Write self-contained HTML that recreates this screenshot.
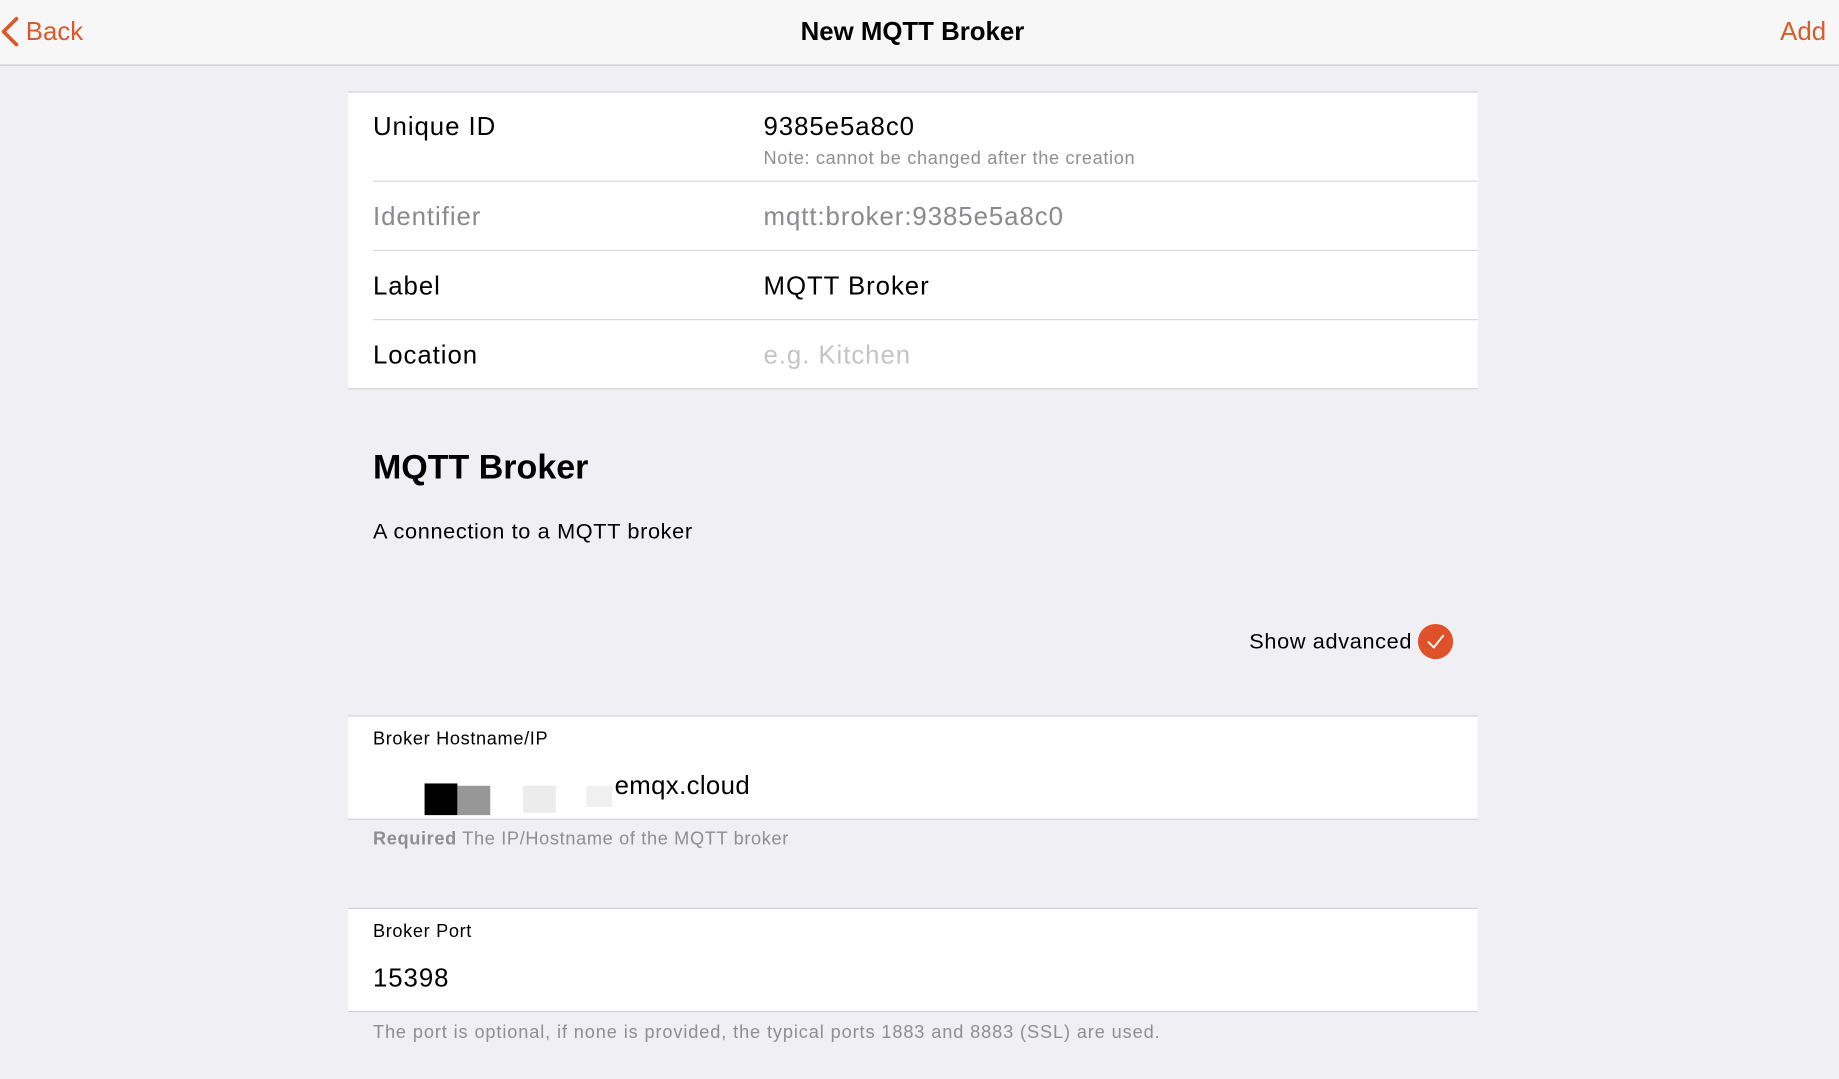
<!DOCTYPE html>
<html><head><meta charset="utf-8"><style>
html,body{margin:0;padding:0;width:1839px;height:1079px;overflow:hidden;background:#efeff4;}
#s{position:absolute;left:0;top:0;width:1568px;height:920px;transform:scale(1.17283);transform-origin:0 0;font-family:"Liberation Sans",sans-serif;color:#000;background:#efeff4;}
.a{position:absolute;white-space:nowrap;line-height:1;}
.m{letter-spacing:0.8px;}
.sm{letter-spacing:0.55px;}
.hdr{position:absolute;left:0;top:0;width:1568px;height:55px;background:#f7f7f7;border-bottom:1px solid #c8c7cc;}
.card{position:absolute;left:297px;width:963px;background:#fff;border-top:1px solid #d0d0d4;border-bottom:1px solid #d0d0d4;}
.sep{position:absolute;left:318px;width:942px;height:1px;background:#d8d8dc;}
.or{color:#d95b2b;}
.g{color:#8e8e93;}
</style></head><body><div id="s">
<div class="hdr"></div>
<svg style="position:absolute;left:0;top:14px" width="18" height="26" viewBox="0 0 18 26"><path d="M14 2 L3 13 L14 24" fill="none" stroke="#d95b2b" stroke-width="3.2" stroke-linecap="round" stroke-linejoin="round"/></svg>
<div class="a or" style="left:22px;top:16px;font-size:22px;">Back</div>
<div class="a" style="left:0;width:1556px;text-align:center;top:16px;font-size:22px;font-weight:bold;">New MQTT Broker</div>
<div class="a or" style="right:11px;top:16px;font-size:22px;">Add</div>

<div class="card" style="top:78px;height:252px;"></div>
<div class="sep" style="top:154px"></div>
<div class="sep" style="top:213px"></div>
<div class="sep" style="top:272px"></div>
<div class="a m" style="left:318px;top:97px;font-size:22px;">Unique ID</div>
<div class="a m" style="left:651px;top:97px;font-size:22px;">9385e5a8c0</div>
<div class="a g sm" style="left:651px;top:128px;font-size:15.5px;">Note: cannot be changed after the creation</div>
<div class="a m" style="left:318px;top:174px;font-size:22px;color:#8a8a8e;">Identifier</div>
<div class="a m" style="left:651px;top:174px;font-size:22px;color:#8a8a8e;">mqtt:broker:9385e5a8c0</div>
<div class="a m" style="left:318px;top:233px;font-size:22px;">Label</div>
<div class="a m" style="left:651px;top:233px;font-size:22px;">MQTT Broker</div>
<div class="a m" style="left:318px;top:292px;font-size:22px;">Location</div>
<div class="a m" style="left:651px;top:292px;font-size:22px;color:#c4c4c8;">e.g. Kitchen</div>

<div class="a" style="left:318px;top:385px;font-size:29px;font-weight:bold;">MQTT Broker</div>
<div class="a sm" style="left:318px;top:444px;font-size:18.5px;">A connection to a MQTT broker</div>

<div class="a sm" style="right:364px;top:538px;font-size:18.5px;">Show advanced</div>
<div style="position:absolute;left:1209px;top:532px;width:30px;height:30px;border-radius:50%;background:#e0512a;"></div>
<svg style="position:absolute;left:1209px;top:532px" width="30" height="30" viewBox="0 0 30 30"><path d="M9 15.5 L13.5 20 L21.5 10" fill="none" stroke="#fff" stroke-width="1.6" stroke-linecap="round" stroke-linejoin="round"/></svg>

<div class="card" style="top:610px;height:87px;"></div>
<div class="a sm" style="left:318px;top:623px;font-size:15.5px;">Broker Hostname/IP</div>
<div style="position:absolute;left:362px;top:668px;width:28px;height:27px;background:#000;"></div>
<div style="position:absolute;left:390px;top:670px;width:28px;height:25px;background:#979797;"></div>
<div style="position:absolute;left:446px;top:670px;width:28px;height:23px;background:#ececec;"></div>
<div style="position:absolute;left:500px;top:670px;width:22px;height:18px;background:#f0f0f0;"></div>
<div class="a" style="left:524px;top:659px;font-size:22px;letter-spacing:0.3px;">emqx.cloud</div>
<div class="a g sm" style="left:318px;top:708px;font-size:15.5px;"><b>Required</b> The IP/Hostname of the MQTT broker</div>

<div class="card" style="top:774px;height:87px;"></div>
<div class="a sm" style="left:318px;top:787px;font-size:15.5px;">Broker Port</div>
<div class="a m" style="left:318px;top:823px;font-size:22px;">15398</div>
<div class="a g" style="left:318px;top:873px;font-size:15.5px;letter-spacing:0.75px;">The port is optional, if none is provided, the typical ports 1883 and 8883 (SSL) are used.</div>
</div></body></html>
